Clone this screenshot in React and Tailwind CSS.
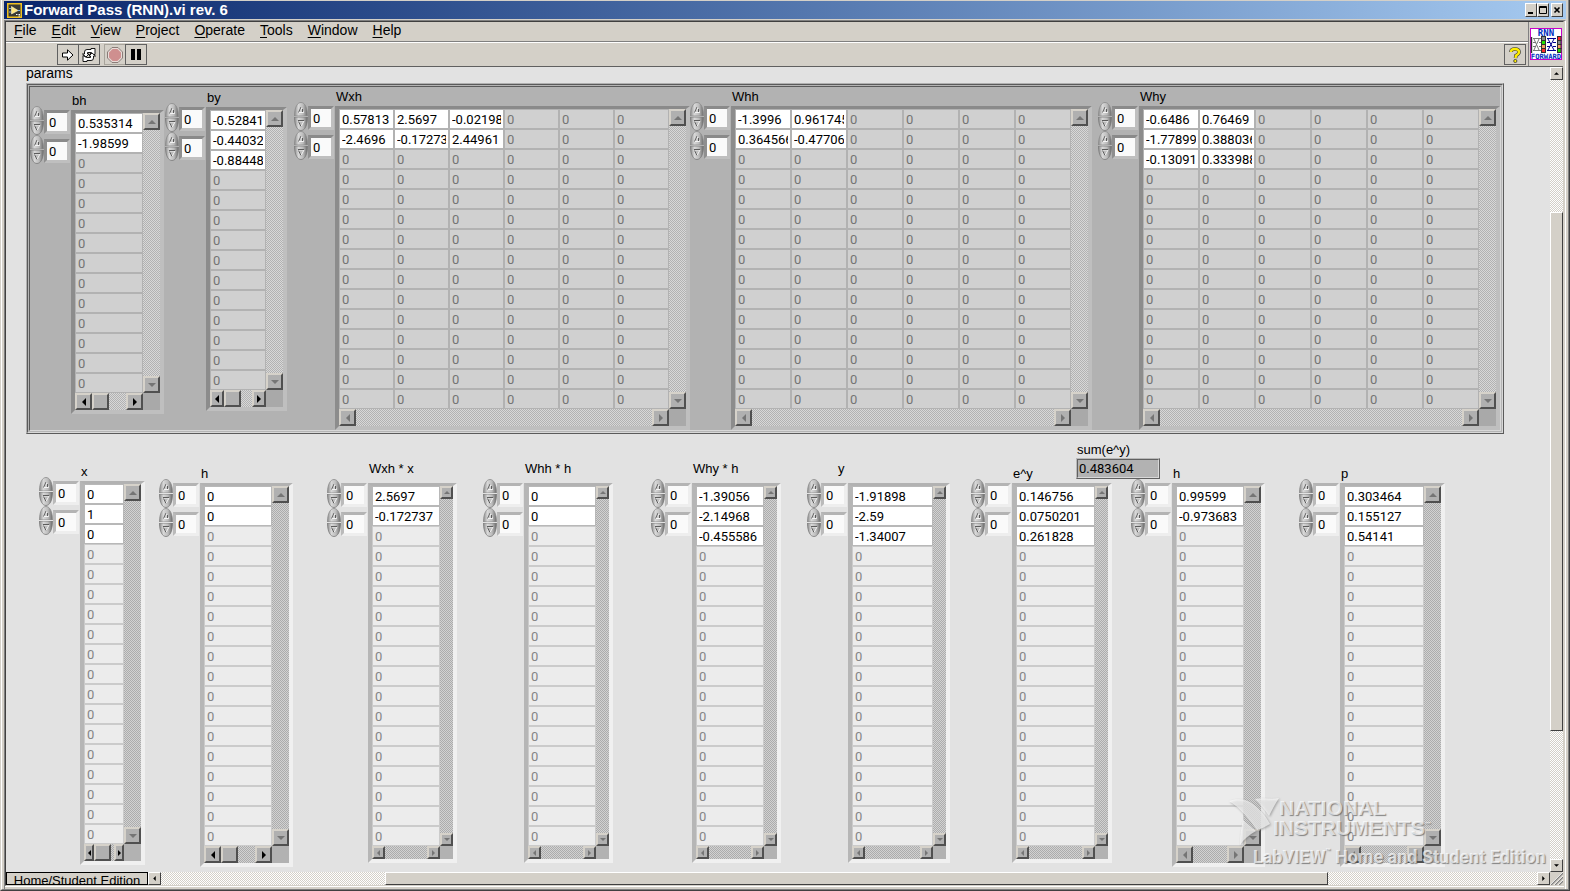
import React from "react";

const CHECK_WINDOW = "bg-[repeating-conic-gradient(#ffffff_0_25%,#d4d0c8_0_50%)] bg-[length:2px_2px]";
const CHECK_PARAMS = "bg-[repeating-conic-gradient(#d8d8d8_0_25%,#b2b2b2_0_50%)] bg-[length:2px_2px]";
const CHECK_PANEL = "bg-[repeating-conic-gradient(#d2d2d2_0_25%,#acacac_0_50%)] bg-[length:2px_2px]";

const THEMES = {
  params: {
    frame: "border-t-[#8a8a8a] border-l-[#8c8c8c] border-r-[#bfbfbf] border-b-[#bfbfbf] bg-[#a9a9a9]",
    index: "border-t-[#8a8a8a] border-l-[#8f8f8f] border-r-[#bfbfbf] border-b-[#bfbfbf]",
    filled: "border-[#b2b2b2] bg-white text-black",
    empty: "border-[#b2b2b2] bg-[#d0d0d0] text-[#747474]",
    track: CHECK_PARAMS,
  },
  panel: {
    frame: "border-t-[#b2b2b2] border-l-[#b6b6b6] border-r-[#f0f0f0] border-b-[#f0f0f0] bg-[#b2b2b2]",
    index: "border-t-[#b4b4b4] border-l-[#bababa] border-r-[#eeeeee] border-b-[#eeeeee]",
    filled: "border-[#b8b8b8] bg-white text-black",
    empty: "border-[#cbcbcb] bg-[#ececec] text-[#858585]",
    track: CHECK_PANEL,
  },
};

const ARROWS = {
  up: "M0 4 L4 0 L8 4 Z",
  down: "M0 0 L4 4 L8 0 Z",
  left: "M4 0 L0 4 L4 8 Z",
  right: "M0 0 L4 4 L0 8 Z",
};

function Arrow({ dir, className }) {
  const flat = dir === "up" || dir === "down";
  return (
    <svg viewBox={flat ? "0 0 8 4" : "0 0 4 8"} className={className} aria-hidden="true">
      <path d={ARROWS[dir]} fill="currentColor" />
    </svg>
  );
}

function ScrollButton({ dir, enabled, size, label }) {
  const flat = dir === "up" || dir === "down";
  const big = flat ? "h-1 w-2" : "h-2 w-1";
  const small = flat ? "h-[3px] w-1.5" : "h-1.5 w-[3px]";
  return (
    <button
      type="button"
      aria-label={label}
      className={`flex shrink-0 items-center justify-center border-2 border-t-[#d6d2ca] border-r-[#505050] border-b-[#505050] border-l-[#d6d2ca] bg-[#b0b0b0] ${size} ${
        enabled ? "text-black" : "text-[#757575]"
      }`}
    >
      <Arrow dir={dir} className={size.includes("w-[10px]") || size.includes("w-[13px]") ? small : big} />
    </button>
  );
}

function SpinnerButton({ up, label }) {
  return (
    <button type="button" aria-label={label} className="block h-[14px] w-[14px]">
      <svg viewBox="0 0 14 14" className="block h-[14px] w-[14px]" aria-hidden="true">
        <defs>
          <linearGradient id={up ? "capUp" : "capDown"} x1="0" y1="0" x2="1" y2="0">
            <stop offset="0" stopColor="#8e8e8e" />
            <stop offset="0.3" stopColor="#d8d8d8" />
            <stop offset="0.65" stopColor="#bcbcbc" />
            <stop offset="1" stopColor="#6a6a6a" />
          </linearGradient>
        </defs>
        {up ? (
          <>
            <path d="M0.5 14 C0.5 5 3.5 0.5 7 0.5 S13.5 5 13.5 14 Z" fill="url(#capUp)" stroke="#8a8a8a" strokeWidth="0.8" />
            <path d="M4.5 10.5 L7 5 L9.5 10.5 Z" fill="#cfcfcf" stroke="#f4f4f4" strokeWidth="1" />
            <path d="M4.5 10.5 L7 5" stroke="#5c5c5c" strokeWidth="1" />
            <path d="M8.5 7 V10" stroke="#5c5c5c" strokeWidth="1" />
          </>
        ) : (
          <>
            <path d="M0.5 0 C0.5 9 3.5 13.5 7 13.5 S13.5 9 13.5 0 Z" fill="url(#capDown)" stroke="#7a7a7a" strokeWidth="0.8" />
            <path d="M4 4 H10 L7 9.5 Z" fill="#bdbdbd" stroke="#f0f0f0" strokeWidth="1" />
            <path d="M4 3.5 H10 M4.5 4.5 L7 9.5" fill="none" stroke="#5c5c5c" strokeWidth="1" />
          </>
        )}
      </svg>
    </button>
  );
}

function IndexControl({ theme, name }) {
  return (
    <div className="flex h-[29px] w-[41px]">
      <div className="flex w-[14px] flex-col gap-px">
        <SpinnerButton up label={`Increment ${name}`} />
        <SpinnerButton label={`Decrement ${name}`} />
      </div>
      <input
        aria-label={name}
        defaultValue="0"
        className={`mt-1 h-6 w-[26px] rounded-none border-[3px] bg-[#fafafa] pl-0.5 font-[Roboto] text-[13px] leading-[18px] text-black outline-none ${THEMES[theme].index}`}
      />
    </div>
  );
}

/* scroll: "wide" | "narrow" bars; thumb: horizontal bar is live */
function ArrayControl({ theme = "panel", name, rows, count, cols = 1, cell, scroll = "wide", thumb, hButton, raised, labelShift = "ml-px", className = "" }) {
  const t = THEMES[theme];
  const bar = scroll === "wide" ? "w-[17px]" : "w-[13px]";
  const vSize = scroll === "wide" ? "h-[17px] w-[17px]" : "h-[13px] w-[13px]";
  const hSize = hButton || vSize;
  return (
    <section className={`flex shrink-0 items-start ${className}`} aria-label={name}>
      <div className={raised ? "pt-[19px]" : "pt-[14px]"}>
        <IndexControl theme={theme} name={`${name} row index`} />
        <IndexControl theme={theme} name={`${name} column index`} />
      </div>
      <div>
        <h2 className={`h-4 text-[13px] leading-[18px] whitespace-nowrap ${raised ? "mb-[7px]" : "mb-0.5"} ${labelShift}`}>{name}</h2>
        <div className={`w-fit border-t-[3px] border-r-4 border-b-4 border-l-4 ${t.frame}`}>
          <div className="flex">
            <div>
              <table className="border-separate border-spacing-0">
                <tbody>
                  {Array.from({ length: count }, (_, r) => (
                    <tr key={r}>
                      {Array.from({ length: cols }, (_, c) => {
                        const value = rows[r]?.[c];
                        return (
                          <td key={c} className={`border p-0 ${value === undefined ? t.empty : t.filled}`}>
                            <div className={`h-[18px] px-0.5 ${cell}`}>
                              <div className="overflow-hidden font-[Roboto] text-[13px] leading-5 whitespace-nowrap">{value ?? "0"}</div>
                            </div>
                          </td>
                        );
                      })}
                    </tr>
                  ))}
                </tbody>
              </table>
              <div className={`flex ${t.track}`}>
                <ScrollButton dir="left" enabled={thumb} size={hSize} label={`Scroll ${name} left`} />
                {thumb && (
                  <div className="w-[17px] border-2 border-t-[#d6d2ca] border-r-[#505050] border-b-[#505050] border-l-[#d6d2ca] bg-[#b0b0b0]" />
                )}
                <div className="flex-1" />
                <ScrollButton dir="right" enabled={thumb} size={hSize} label={`Scroll ${name} right`} />
              </div>
            </div>
            <div className={`flex flex-col ${bar}`}>
              <div className={`flex flex-1 flex-col justify-between ${t.track}`}>
                <ScrollButton dir="up" size={vSize} label={`Scroll ${name} up`} />
                <ScrollButton dir="down" size={vSize} label={`Scroll ${name} down`} />
              </div>
              <div className={scroll === "wide" ? "h-[17px]" : "h-[13px]"} />
            </div>
          </div>
        </div>
      </div>
    </section>
  );
}

function Menu({ label }) {
  return (
    <button type="button" className="text-[14px] leading-4">
      <span className="underline underline-offset-2">{label[0]}</span>
      {label.slice(1)}
    </button>
  );
}

function ToolButton({ label, faint, children }) {
  return (
    <button
      type="button"
      aria-label={label}
      className={`flex h-[21px] w-[22px] items-center justify-center border ${faint ? "border-[#a8a49c]" : "border-[#606060]"}`}
    >
      {children}
    </button>
  );
}

function WindowButton({ label, children }) {
  return (
    <button
      type="button"
      aria-label={label}
      className="flex h-[14px] w-3 items-center justify-center border border-t-white border-r-[#404040] border-b-[#404040] border-l-white bg-[#d4d0c8]"
    >
      {children}
    </button>
  );
}

function FrameScrollButton({ dir, label }) {
  const flat = dir === "up" || dir === "down";
  return (
    <button
      type="button"
      aria-label={label}
      className="flex h-[13px] w-[13px] shrink-0 items-center justify-center border border-t-white border-r-[#404040] border-b-[#404040] border-l-white bg-[#d4d0c8] text-black"
    >
      <Arrow dir={dir} className={flat ? "h-[3px] w-[5px]" : "h-[5px] w-[3px]"} />
    </button>
  );
}

function ViIcon() {
  const mid = ["#8a8a8a", "#22e000", "#f0a060", "#ff2a2a"];
  const right = ["#ff2a2a", "#8a8a8a", "#f0a060", "#22e000"];
  return (
    <svg viewBox="0 0 32 32" className="h-8 w-8" role="img" aria-label="RNN forward">
      <rect x="0.5" y="0.5" width="31" height="31" fill="#fff" stroke="#c800c8" />
      <text x="16" y="7.5" fontFamily="DejaVu Sans Mono, monospace" fontSize="9" fontWeight="bold" fill="#0030c0" textAnchor="middle">RNN</text>
      <text x="16" y="31" fontFamily="DejaVu Sans Mono, monospace" fontSize="7.2" fontWeight="bold" fill="#0030c0" textAnchor="middle">FORWARD</text>
      <path d="M1.5 9 V25" stroke="#303030" strokeWidth="1.4" />
      <path d="M3 10.5 H11 M3 14.5 H6 M3 18.5 H6 M3 22.5 H11 M4 11 L9 22 M4 22 L9 11" stroke="#777" strokeWidth="1" fill="none" />
      <path d="M9 14.5 H11 M9 18.5 H11" stroke="#777" fill="none" />
      <path d="M17 10.5 H26 M17 14.5 H20 M17 18.5 H20 M17 22.5 H26 M18 11 L24 22 M18 22 L24 11" stroke="#000090" strokeWidth="1" fill="none" />
      <path d="M23 14.5 H26 M23 18.5 H26" stroke="#000090" fill="none" />
      {mid.map((c, i) => (
        <rect key={i} x="11.5" y={8.5 + i * 4} width="4" height="4" fill={c} stroke="#303030" />
      ))}
      {right.map((c, i) => (
        <rect key={i} x="27.5" y={8.5 + i * 4} width="3.5" height="4" fill={c} stroke="#303030" />
      ))}
    </svg>
  );
}

function Watermark() {
  return (
    <div className="pointer-events-none absolute right-2 bottom-1 flex w-[313px] flex-col font-bold text-white/70 [text-shadow:1px_1px_1px_rgba(90,90,90,0.7)]">
      <div className="flex">
        <svg viewBox="0 0 50 48" className="-mr-1.5 h-12 w-[50px] drop-shadow-[1px_1px_1px_rgba(90,90,90,0.7)]" aria-hidden="true">
          <path d="M0 3 C8 0 18 1 24 6 C32 12 38 20 41 26 C36 29 32 31 28 32 C22 24 12 10 0 3 Z" fill="#fff" fillOpacity="0.65" />
          <path d="M26 1 C34 -1 42 2 50 0 C46 6 43 12 40 18 C36 12 31 6 26 1 Z" fill="#fff" fillOpacity="0.65" />
          <path d="M14 22 C18 25 23 30 27 33 C20 37 15 41 11 47 C11 38 12 30 14 22 Z" fill="#fff" fillOpacity="0.65" />
        </svg>
        <div className="text-[21px] leading-5">
          <div className="pl-1.5">NATIONAL</div>
          <div>INSTRUMENTS<span className="align-top text-[6px] leading-3">™</span></div>
        </div>
      </div>
      <div className="pl-6 font-[Roboto] text-[18px] leading-[22px] whitespace-nowrap">
        LabVIEW<span className="align-top text-[8px] leading-3">™</span> Home and Student Edition
      </div>
    </div>
  );
}

export default function App() {
  return (
    <div className="flex min-h-screen flex-col border-r border-b border-l border-r-[#404040] border-b-[#404040] border-l-[#d4d0c8] bg-[#d4d0c8] font-['Liberation_Sans',Arial,sans-serif] text-black">
      <div className="flex flex-1 flex-col border-r border-b border-l border-r-[#808080] border-b-[#808080] border-l-white px-0.5 pt-px">
        <header className="flex h-[18px] items-center bg-linear-to-r from-[#0a246a] to-[#a6caf0] pr-[3px] pl-[3px]">
          <svg viewBox="0 0 15 15" className="h-[15px] w-[15px]" aria-hidden="true">
            <rect x="0.75" y="0.75" width="13.5" height="13.5" fill="#3a3a34" stroke="#f0c020" strokeWidth="1.5" />
            <path d="M4.5 3.5 L11 7.5 L4.5 11 Z" fill="#ffe680" stroke="#fff6c8" strokeWidth="0.6" />
            <path d="M2 5.5 H4 M2 9 H4 M11 7.5 H13" stroke="#7fb2e8" />
            <path d="M9 11.5 H10.5 M11.5 11.5 H13 M11.5 13 H13" stroke="#fff" />
          </svg>
          <h1 className="pl-0.5 text-[15px] leading-[18px] font-bold text-white">Forward Pass (RNN).vi rev. 6</h1>
          <div className="ml-auto flex">
            <WindowButton label="Minimize">
              <svg viewBox="0 0 8 8" className="h-2 w-2"><path d="M1 7 H6" stroke="#000" strokeWidth="2" /></svg>
            </WindowButton>
            <WindowButton label="Maximize">
              <svg viewBox="0 0 8 8" className="h-2 w-2"><path d="M0.5 0.5 H7.5 V7.5 H0.5 Z M0 1.5 H8" fill="none" stroke="#000" /></svg>
            </WindowButton>
            <div className="w-0.5" />
            <WindowButton label="Close">
              <svg viewBox="0 0 8 8" className="h-2 w-2"><path d="M1.5 1.5 L6.5 6.5 M6.5 1.5 L1.5 6.5" stroke="#000" strokeWidth="1.6" /></svg>
            </WindowButton>
          </div>
        </header>

        <div className="mt-px flex flex-1 flex-col border-t border-r border-l border-t-[#808080] border-r-white border-l-[#808080] pr-px">
          <div className="flex flex-1 flex-col border border-t-[#404040] border-r-[#d4d0c8] border-b-[#d4d0c8] border-l-[#404040]">
            <div className="flex border-b border-[#606060]">
              <div className="flex-1">
                <nav className="flex h-5 items-start gap-[15px] border-b border-[#808080] pl-2">
                  {["File", "Edit", "View", "Project", "Operate", "Tools", "Window", "Help"].map((m) => (
                    <Menu key={m} label={m} />
                  ))}
                </nav>
                <div className="flex h-6 items-center border-t border-white pr-0.5 pl-[51px]">
                  <ToolButton label="Run">
                    <svg viewBox="0 0 12 12" className="h-3 w-3"><path d="M0.5 4 H5.5 V0.8 L11 6 L5.5 11.2 V8 H0.5 Z" fill="#fff" stroke="#000" /></svg>
                  </ToolButton>
                  <div className="-ml-px">
                    <ToolButton label="Run continuously">
                      <svg viewBox="0 0 16 14" className="h-[14px] w-4">
                        <path d="M3.5 6 L3.5 4 Q3.5 1.5 6 1.5 H10 V0.5 L14 0.5 V6.5 H8.5 L10.5 4.5 H6.5 L6.5 6 H8 L5 9 L1.5 6 Z" fill="#fff" stroke="#000" strokeWidth="0.9" />
                        <path d="M12.5 8 L12.5 10 Q12.5 12.5 10 12.5 H6 V13.5 L2 13.5 V7.5 L5.5 9.5 H9.5 L9.5 8 H8 L11 5 L14.5 8 Z" fill="#fff" stroke="#000" strokeWidth="0.9" />
                      </svg>
                    </ToolButton>
                  </div>
                  <div className="ml-1">
                    <ToolButton label="Abort" faint>
                      <svg viewBox="0 0 16 16" className="h-4 w-4">
                        <path d="M5 0.5 H11 L15.5 5 V11 L11 15.5 H5 L0.5 11 V5 Z" fill="#e8dcd8" stroke="#8a7c78" />
                        <path d="M5.6 2 H10.4 L14 5.6 V10.4 L10.4 14 H5.6 L2 10.4 V5.6 Z" fill="#cf8f8f" />
                      </svg>
                    </ToolButton>
                  </div>
                  <div className="-ml-px">
                    <ToolButton label="Pause">
                      <svg viewBox="0 0 10 11" className="h-[11px] w-2.5"><path d="M0 0 H4 V11 H0 Z M6 0 H10 V11 H6 Z" fill="#000" /></svg>
                    </ToolButton>
                  </div>
                  <div className="ml-auto">
                    <ToolButton label="Context help">
                      <svg viewBox="0 0 12 16" className="h-4 w-3">
                        <path d="M2 5 Q2 2 6 2 Q10 2 10 5 Q10 7 7 8.5 L6.5 11" fill="none" stroke="#333" strokeWidth="3.6" />
                        <path d="M2 5 Q2 2 6 2 Q10 2 10 5 Q10 7 7 8.5 L6.5 11" fill="none" stroke="#ffee00" strokeWidth="2.4" />
                        <circle cx="6.3" cy="14" r="1.6" fill="#ffee00" stroke="#333" strokeWidth="0.8" />
                      </svg>
                    </ToolButton>
                  </div>
                </div>
              </div>
              <div className="flex w-[35px] items-center justify-center border-l border-[#808080]">
                <ViIcon />
              </div>
            </div>

            <div className="flex flex-1">
              <main className="relative min-w-0 flex-1 overflow-hidden bg-[#e2e2e2] pl-5">
                <h2 className="h-4 text-[14px] leading-3">params</h2>
                <div className="w-fit border border-t-[#b0b0b0] border-r-[#5a5a5a] border-b-[#5a5a5a] border-l-[#b0b0b0]">
                  <div className="border border-t-[#5a5a5a] border-r-[#d8d8d8] border-b-[#d8d8d8] border-l-[#5a5a5a]">
                    <div className="border border-[#b4b4b4]">
                      <div className="flex items-start border border-t-[#5a5a5a] border-r-[#d8d8d8] border-b-[#d8d8d8] border-l-[#5a5a5a] bg-[#b2b2b2] pt-px">
                        <ArrayControl theme="params" name="bh" count={14} cell="w-[66px]" thumb className="mt-1"
                          rows={[["0.535314"], ["-1.98599"]]} />
                        <ArrayControl theme="params" name="by" count={14} cell="w-[54px]" thumb hButton="h-[17px] w-[14px]" className="mt-px ml-px"
                          rows={[["-0.528417"], ["-0.440321"], ["-0.884482"]]} />
                        <ArrayControl theme="params" name="Wxh" count={15} cols={6} cell="w-[53px]" className="ml-[7px]"
                          rows={[["0.57813", "2.5697", "-0.02198"], ["-2.4696", "-0.17273", "2.44961"]]} />
                        <ArrayControl theme="params" name="Whh" count={15} cols={6} cell="w-[54px]"
                          rows={[["-1.3996", "0.961745"], ["0.364566", "-0.477064"]]} />
                        <ArrayControl theme="params" name="Why" count={15} cols={6} cell="w-[54px]" className="ml-1.5"
                          rows={[["-0.6486", "0.76469"], ["-1.77899", "0.388036"], ["-0.130912", "0.333988"]]} />
                      </div>
                    </div>
                  </div>
                </div>

                <div className="mt-1.5 ml-[1050px] w-[84px]">
                  <label htmlFor="sum" className="mb-0.5 block h-4 pl-px text-[13px] leading-5">sum(e^y)</label>
                  <div className="border border-t-[#b8b8b8] border-r-[#606060] border-b-[#606060] border-l-[#b8b8b8]">
                    <input id="sum" readOnly value="0.483604"
                      className="block h-[19px] w-full border border-t-[#606060] border-r-[#d8d8d8] border-b-[#d8d8d8] border-l-[#606060] bg-[#b2b2b2] pl-px font-[Roboto] text-[13px] leading-[17px] outline-none" />
                  </div>
                </div>

                <div className="-mt-[19px] flex items-start pl-[13px]">
                  <ArrayControl name="x" count={18} cell="w-[38px]" thumb hButton="h-[17px] w-[10px]" className="mt-[3px]"
                    rows={[["0"], ["1"], ["0"]]} />
                  <ArrayControl name="h" count={18} cell="w-[66px]" thumb className="mt-[5px] ml-[14px]"
                    rows={[["0"], ["0"]]} />
                  <ArrayControl name="Wxh * x" count={18} cell="w-[66px]" scroll="narrow" raised className="ml-[34px]"
                    rows={[["2.5697"], ["-0.172737"]]} />
                  <ArrayControl name="Whh * h" count={18} cell="w-[66px]" scroll="narrow" raised className="ml-[26px]"
                    rows={[["0"], ["0"]]} />
                  <ArrayControl name="Why * h" count={18} cell="w-[66px]" scroll="narrow" raised className="ml-[38px]"
                    rows={[["-1.39056"], ["-2.14968"], ["-0.455586"]]} />
                  <ArrayControl name="y" count={18} cell="w-[79px]" scroll="narrow" raised labelShift="-ml-2.5" className="ml-[26px]"
                    rows={[["-1.91898"], ["-2.59"], ["-1.34007"]]} />
                  <ArrayControl name="e^y" count={18} cell="w-[77px]" scroll="narrow" className="mt-[5px] ml-[21px]"
                    rows={[["0.146756"], ["0.0750201"], ["0.261828"]]} />
                  <ArrayControl name="h" count={18} cell="w-[66px]" className="mt-[5px] ml-[19px]"
                    rows={[["0.99599"], ["-0.973683"]]} />
                  <ArrayControl name="p" count={18} cell="w-[78px]" className="mt-[5px] ml-[34px]"
                    rows={[["0.303464"], ["0.155127"], ["0.54141"]]} />
                </div>
                <Watermark />
              </main>

              <div className={`flex w-[13px] flex-col ${CHECK_WINDOW}`}>
                <FrameScrollButton dir="up" label="Scroll panel up" />
                <div className="flex-[132]" />
                <div className="flex-[519] border border-t-white border-r-[#404040] border-b-[#404040] border-l-white bg-[#d4d0c8]" />
                <div className="flex-[128]" />
                <FrameScrollButton dir="down" label="Scroll panel down" />
              </div>
            </div>

            <div className={`flex h-[13px] ${CHECK_WINDOW}`}>
              <button type="button" className="h-[13px] w-[142px] overflow-hidden border border-black bg-[#d4d0c8] text-[13px] leading-[15px] whitespace-nowrap">
                Home/Student Edition
              </button>
              <FrameScrollButton dir="left" label="Scroll panel left" />
              <div className="flex-[224]" />
              <div className="flex-[943] border border-t-white border-r-[#404040] border-b-[#404040] border-l-white bg-[#d4d0c8]" />
              <div className="flex-[209]" />
              <FrameScrollButton dir="right" label="Scroll panel right" />
              <svg viewBox="0 0 13 13" className="h-[13px] w-[13px] bg-[#d4d0c8]" aria-hidden="true">
                <path d="M1 13 L13 1 M5 13 L13 5 M9 13 L13 9" stroke="#808080" strokeWidth="1.4" />
                <path d="M0 13 L13 0 M4 13 L13 4 M8 13 L13 8" stroke="#fff" strokeWidth="0.7" />
              </svg>
            </div>
          </div>
          <div className="h-[3px] border-t border-white bg-[#d4d0c8]" />
        </div>
      </div>
    </div>
  );
}
